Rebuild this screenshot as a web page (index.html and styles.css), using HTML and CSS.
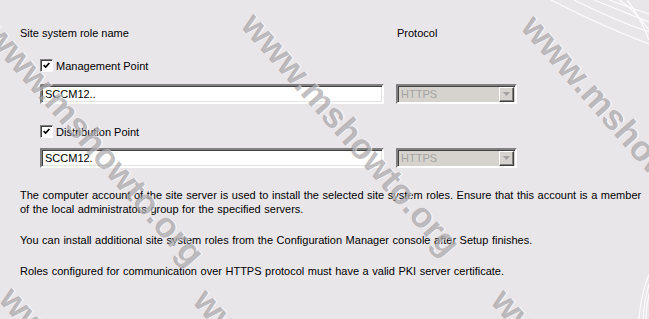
FILE: index.html
```html
<!DOCTYPE html>
<html>
<head>
  <title>Site System Roles</title>
  <link rel="stylesheet" href="styles.css">
</head>
<body>
  <div class="page">
    <div class="roles">
      <div class="head">
        <span class="col-name">Site system role name</span>
        <span class="col-protocol">Protocol</span>
      </div>

      <div class="role">
        <label class="check">
          <span class="box">
            <svg viewBox="0 0 11 11"><path d="M2 5l2.5 2.5L9 2.5" fill="none" stroke="#000" stroke-width="2"/></svg>
          </span>
          Management Point
        </label>
        <div class="fields">
          <div class="textbox">SCCM12..</div>
          <div class="combo disabled">
            <span class="value">HTTPS</span>
            <span class="drop"><svg viewBox="0 0 7 4"><path d="M0 0h7L3.5 4z" fill="#a0a0a0"/></svg></span>
          </div>
        </div>
      </div>

      <div class="role">
        <label class="check">
          <span class="box">
            <svg viewBox="0 0 11 11"><path d="M2 5l2.5 2.5L9 2.5" fill="none" stroke="#000" stroke-width="2"/></svg>
          </span>
          Distribution Point
        </label>
        <div class="fields">
          <div class="textbox">SCCM12.</div>
          <div class="combo disabled">
            <span class="value">HTTPS</span>
            <span class="drop"><svg viewBox="0 0 7 4"><path d="M0 0h7L3.5 4z" fill="#a0a0a0"/></svg></span>
          </div>
        </div>
      </div>
    </div>

    <div class="notes">
      <p>The computer account of the site server is used to install the selected site system roles. Ensure that this account is a member of the local administrators group for the specified servers.</p>
      <p>You can install additional site system roles from the Configuration Manager console after Setup finishes.</p>
      <p>Roles configured for communication over HTTPS protocol must have a valid PKI server certificate.</p>
    </div>

    <!-- wizard background swooshes -->
    <svg class="swoosh swoosh-top" viewBox="0 0 110 90">
      <path d="M12 0 Q60 25 110 44" />
      <path d="M35 0 Q75 20 110 32" />
      <path d="M55 0 Q85 12 110 22" />
      <path d="M70 0 Q92 8 110 14" />
      <path d="M80 0 Q96 10 110 30" />
      <path d="M88 0 Q100 14 110 40" />
    </svg>
    <svg class="swoosh swoosh-bottom" viewBox="0 0 20 50">
      <path d="M20 5 Q12 25 10 50" />
      <path d="M20 15 Q15 32 14 50" />
      <path d="M20 25 Q17 38 17 50" />
    </svg>

    <div class="watermarks">
      <span class="wm wm-1">www.mshowto.org</span>
      <span class="wm wm-2">www.mshowto.org</span>
      <span class="wm wm-3">www.mshowto.org</span>
      <span class="wm wm-4">www.mshowto.org</span>
      <span class="wm wm-5">www.mshowto.org</span>
      <span class="wm wm-6">www.mshowto.org</span>
    </div>
  </div>
</body>
</html>
```

FILE: styles.css
```css
:root {
  --dialog-bg: #e9e6ea;
  --text: #000000;
  --disabled-bg: #d6d3ce;
  --disabled-text: #a3a3a3;
  --edge-dark: #404040;
  --edge-mid: #808080;
  --edge-light: #ffffff;
  --ui-font: "Liberation Sans", Arial, sans-serif;
}

html, body {
  margin: 0;
  height: 100%;
}

body {
  background: var(--dialog-bg);
  color: var(--text);
  font-family: var(--ui-font);
  font-size: 11px;
  line-height: 14px;
}

.page {
  position: relative;
  height: 100%;
  overflow: hidden;
  padding: 26px 0 0 20px;
  box-sizing: border-box;
}

/* role list */
.head {
  display: flex;
}

.col-name {
  width: 377px;
}

.role {
  padding-left: 20px;
}

.check {
  display: flex;
  align-items: center;
  gap: 3px;
  height: 13px;
  margin-top: 19px;
}

.role + .role .check {
  margin-top: 21px;
}

.box {
  width: 11px;
  height: 11px;
  background: #fff;
  border: 1px solid;
  border-color: var(--edge-mid) var(--edge-light) var(--edge-light) var(--edge-mid);
  box-shadow: inset 1px 1px 0 var(--edge-dark);
  display: flex;
  align-items: center;
  justify-content: center;
}

.box svg {
  width: 9px;
  height: 9px;
}

.fields {
  display: flex;
  gap: 12px;
  margin-top: 12px;
}

.role + .role .fields {
  margin-top: 10px;
}

.textbox {
  width: 334px;
  height: 16px;
  padding: 0 3px;
  line-height: 16px;
  background: #fff;
  border: 2px solid;
  border-color: var(--edge-mid) var(--edge-light) var(--edge-light) var(--edge-mid);
  box-shadow: inset 1px 1px 0 var(--edge-dark), inset -1px -1px 0 #e3e3e3;
}

.combo {
  width: 117px;
  height: 16px;
  display: flex;
  align-items: center;
  border: 2px solid;
  border-color: var(--edge-mid) var(--edge-light) var(--edge-light) var(--edge-mid);
  box-shadow: inset 1px 1px 0 var(--edge-dark);
  background: var(--disabled-bg);
}

.combo .value {
  flex: 1;
  padding-left: 3px;
  color: var(--disabled-text);
}

.drop {
  width: 15px;
  height: 15px;
  margin-right: 1px;
  box-sizing: border-box;
  border: 1px solid;
  border-color: var(--edge-light) var(--edge-dark) var(--edge-dark) var(--edge-light);
  box-shadow: inset -1px -1px 0 var(--edge-mid);
  display: flex;
  align-items: center;
  justify-content: center;
}

.drop svg {
  width: 7px;
  height: 4px;
}

/* explanatory text */
.notes {
  margin-top: 20px;
  width: 622px;
  word-spacing: 0.5px;
}

.notes p {
  margin: 0 0 17px;
}

/* background decoration */
.swoosh {
  position: absolute;
  fill: none;
  stroke: #fff;
  stroke-width: 1.2;
  opacity: 0.9;
}

.swoosh-top {
  top: 0;
  right: 0;
  width: 110px;
  height: 90px;
}

.swoosh-bottom {
  right: 0;
  bottom: 0;
  width: 20px;
  height: 50px;
}

/* watermark overlay */
.watermarks {
  position: absolute;
  inset: 0;
  pointer-events: none;
}

.wm {
  position: absolute;
  transform: rotate(48.5deg);
  transform-origin: 0 0;
  font-family: var(--ui-font);
  font-weight: bold;
  font-size: 35px;
  line-height: 35px;
  white-space: nowrap;
  color: rgba(105, 102, 105, 0.42);
  text-shadow: 1px -1px 0 rgba(255, 255, 255, 0.6);
}

.wm-1 { left: 6px; top: 16px; }
.wm-2 { left: 262px; top: 6px; }
.wm-3 { left: 542px; top: 8px; }
.wm-4 { left: 20px; top: 280px; }
.wm-5 { left: 214px; top: 282px; }
.wm-6 { left: 512px; top: 282px; }
```
